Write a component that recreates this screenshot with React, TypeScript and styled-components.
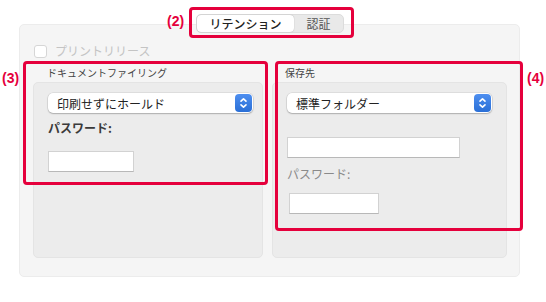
import styled, {createGlobalStyle} from 'styled-components'

const GlobalStyle = createGlobalStyle`
  html, body {
    margin: 0;
    padding: 0;
    background: #ffffff;
  }
  body {
    font-family: 'Noto Sans CJK JP', 'Noto Sans', sans-serif;
    color: #333333;
  }
`

const Page = styled.div`
  position: relative;
  width: 546px;
  height: 302px;
  padding: 24px 26px 0 19px;
  box-sizing: border-box;
  overflow: hidden;
`

const Panel = styled.div`
  width: 501px;
  height: 253px;
  box-sizing: border-box;
  background: #f5f5f5;
  border: 1px solid #ececec;
  border-radius: 5px;
  padding: 0 12px 18px 13px;
  display: flex;
  flex-direction: column;
`

const TabBar = styled.div`
  align-self: center;
  margin-top: -11px;
  display: flex;
  height: 19px;
  border-radius: 5px;
  background: #e9e9e9;
  border: 1px solid #dcdcdc;
  box-sizing: border-box;
`

const Tab = styled.div<{ $active?: boolean }>`
  display: flex;
  align-items: center;
  justify-content: center;
  width: ${p => (p.$active ? 97 : 49)}px;
  font-size: 12px;
  line-height: 1;
  color: ${p => (p.$active ? '#222222' : '#555555')};
  font-weight: ${p => (p.$active ? 500 : 400)};
  background: ${p => (p.$active ? '#ffffff' : 'transparent')};
  border-radius: 4px;
  box-shadow: ${p => (p.$active ? '0 0 1px rgba(0,0,0,0.35)' : 'none')};
`

const CheckRow = styled.div`
  display: flex;
  align-items: center;
  gap: 8px;
  height: 14px;
  margin-top: 11px;
  padding-left: 1px;
`

const CheckBox = styled.span`
  width: 11px;
  height: 11px;
  border: 1px solid #d6d6d6;
  border-radius: 3px;
  background: #ffffff;
`

const CheckLabel = styled.span`
  font-size: 12px;
  color: #c4c4c4;
  line-height: 1;
`

const Columns = styled.div`
  flex: 1;
  display: grid;
  grid-template-columns: 230px 235px;
  column-gap: 9px;
  margin-top: 5px;
`

const Column = styled.div`
  display: flex;
  flex-direction: column;
`

const GroupTitle = styled.div<{ $indent: number }>`
  height: 19px;
  padding-left: ${p => p.$indent}px;
  font-size: 10px;
  line-height: 19px;
  color: #444444;
`

const GroupBox = styled.div`
  flex: 1;
  background: #ececec;
  border: 1px solid #e4e4e4;
  border-radius: 5px;
  padding: 10px 10px 0 14px;
  display: flex;
  flex-direction: column;
  align-items: flex-start;
`

const PopUp = styled.div<{ $width: number }>`
  width: ${p => p.$width}px;
  height: 20px;
  box-sizing: border-box;
  background: #ffffff;
  border-radius: 5px;
  box-shadow: 0 0 0 0.5px rgba(0, 0, 0, 0.12), 0 1px 1.5px rgba(0, 0, 0, 0.22);
  display: flex;
  align-items: center;
  justify-content: space-between;
  padding: 0 1px 0 9px;
  font-size: 12px;
  color: #222222;
`

const Stepper = styled.span`
  width: 17px;
  height: 18px;
  border-radius: 4px;
  background: linear-gradient(#4e8ff0, #2a6fd6);
  display: flex;
  align-items: center;
  justify-content: center;
`

const FieldLabel = styled.div<{ $strong?: boolean; $top: number }>`
  margin-top: ${p => p.$top}px;
  font-size: 12px;
  line-height: 16px;
  font-weight: ${p => (p.$strong ? 700 : 400)};
  color: ${p => (p.$strong ? '#3a3a3a' : '#8a8a8a')};
`

const TextField = styled.div<{ $width: number; $top: number; $left?: number }>`
  margin-top: ${p => p.$top}px;
  margin-left: ${p => p.$left ?? 0}px;
  width: ${p => p.$width}px;
  height: 21px;
  box-sizing: border-box;
  background: #ffffff;
  border: 1px solid #d2d2d2;
  border-bottom-color: #b8b8b8;
`

const Callout = styled.div<{ $x: number; $y: number; $w: number; $h: number }>`
  position: absolute;
  left: ${p => p.$x}px;
  top: ${p => p.$y}px;
  width: ${p => p.$w}px;
  height: ${p => p.$h}px;
  box-sizing: border-box;
  border: 3px solid #e5003c;
  border-radius: 4px;
  pointer-events: none;
`

const CalloutNumber = styled.span<{ $x: number; $y: number }>`
  position: absolute;
  left: ${p => p.$x}px;
  top: ${p => p.$y}px;
  font-family: 'Liberation Sans', Arial, sans-serif;
  font-weight: 700;
  font-size: 14px;
  color: #e5003c;
  line-height: 1;
`

const StepperIcon = () => (
  <Stepper>
    <svg width="9" height="12" viewBox="0 0 9 12" fill="none" stroke="#ffffff" strokeWidth="1.6" strokeLinecap="round" strokeLinejoin="round">
      <path d="M2 4.2 L4.5 1.8 L7 4.2" />
      <path d="M2 7.8 L4.5 10.2 L7 7.8" />
    </svg>
  </Stepper>
)

export default function App() {
  return (
    <Page>
      <GlobalStyle />
      <Panel>
        <TabBar>
          <Tab $active>リテンション</Tab>
          <Tab>認証</Tab>
        </TabBar>
        <CheckRow>
          <CheckBox />
          <CheckLabel>プリントリリース</CheckLabel>
        </CheckRow>
        <Columns>
          <Column>
            <GroupTitle $indent={14}>ドキュメントファイリング</GroupTitle>
            <GroupBox>
              <PopUp $width={205}>
                印刷せずにホールド
                <StepperIcon />
              </PopUp>
              <FieldLabel $strong $top={7}>パスワード:</FieldLabel>
              <TextField $width={86} $top={15} />
            </GroupBox>
          </Column>
          <Column>
            <GroupTitle $indent={13}>保存先</GroupTitle>
            <GroupBox>
              <PopUp $width={205}>
                標準フォルダー
                <StepperIcon />
              </PopUp>
              <TextField $width={173} $top={24} />
              <FieldLabel $top={8}>パスワード:</FieldLabel>
              <TextField $width={90} $top={11} $left={2} />
            </GroupBox>
          </Column>
        </Columns>
      </Panel>

      <Callout $x={189} $y={7} $w={165} $h={31} />
      <CalloutNumber $x={167} $y={14}>(2)</CalloutNumber>
      <Callout $x={23} $y={61} $w={245} $h={124} />
      <CalloutNumber $x={2} $y={71}>(3)</CalloutNumber>
      <Callout $x={275} $y={61} $w={248} $h={170} />
      <CalloutNumber $x={527} $y={71}>(4)</CalloutNumber>
    </Page>
  )
}
